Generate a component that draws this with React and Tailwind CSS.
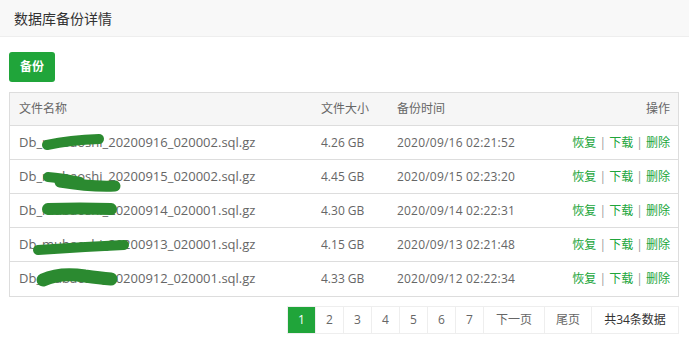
import React from 'react'

const rows = [
  { name: 'Db_mubaoshi_20200916_020002.sql.gz', size: '4.26 GB', time: '2020/09/16 02:21:52' },
  { name: 'Db_mubaoshi_20200915_020002.sql.gz', size: '4.45 GB', time: '2020/09/15 02:23:20' },
  { name: 'Db_mubaoshi_20200914_020001.sql.gz', size: '4.30 GB', time: '2020/09/14 02:22:31' },
  { name: 'Db_mubaoshi_20200913_020001.sql.gz', size: '4.15 GB', time: '2020/09/13 02:21:48' },
  { name: 'Db_mubaoshi_20200912_020001.sql.gz', size: '4.33 GB', time: '2020/09/12 02:22:34' },
]

const pages = ['1', '2', '3', '4', '5', '6', '7']

// green marker scribbles hiding part of the file names
function Scribbles() {
  return (
    <svg className="absolute left-0 top-0 pointer-events-none" width="689" height="345" viewBox="0 0 689 345">
      <g fill="none" stroke="#2b8a30" strokeLinecap="round">
        <path d="M47 145 Q70 140 99 139" strokeWidth="10" />
        <path d="M48 177 Q62 178 80 182" strokeWidth="10" />
        <path d="M60 182 Q90 187 115 186" strokeWidth="11" />
        <path d="M48 209 Q80 208 111 209" strokeWidth="12" />
        <path d="M38 250 Q80 247 124 245" strokeWidth="10" />
        <path d="M43 280 Q60 272 85 276 Q100 278 111 279" strokeWidth="13" />
      </g>
    </svg>
  )
}

export default function App() {
  return (
    <div className="relative w-[689px] h-[345px] bg-white text-[#666] font-['Open_Sans','Noto_Sans_CJK_SC',sans-serif] overflow-hidden">
      {/* title bar */}
      <div className="h-[37px] bg-[#f8f8f8] border-b border-[#eee] flex items-center px-[14px]">
        <span className="text-[14px] text-[#333]">数据库备份详情</span>
      </div>

      <div className="pl-[9px] pr-[10px] pt-[15px]">
        <button className="h-[30px] w-[46px] rounded-[3px] bg-[#20a53a] text-white text-[12px] font-bold">备份</button>

        {/* table */}
        <div className="mt-[10px] border border-[#ddd] text-[12px]">
          <div className="grid grid-cols-[302px_76px_1fr_auto] h-[33px] items-center bg-[#f6f6f6] border-b border-[#ddd] px-[9px] pr-[8px]">
            <span>文件名称</span>
            <span>文件大小</span>
            <span>备份时间</span>
            <span className="text-right">操作</span>
          </div>
          {rows.map((r, i) => (
            <div
              key={r.time}
              className={`grid grid-cols-[302px_76px_1fr_auto] h-[34px] items-center px-[9px] pr-[8px] ${i < rows.length - 1 ? 'border-b border-[#ddd]' : 'h-[33px]'}`}
            >
              <span className="text-[13px]">{r.name}</span>
              <span>{r.size}</span>
              <span className="tracking-[0.2px]">{r.time}</span>
              <span className="text-right">
                <a className="text-[#20a53a]">恢复</a>
                <span className="text-[#999]"> | </span>
                <a className="text-[#20a53a]">下载</a>
                <span className="text-[#999]"> | </span>
                <a className="text-[#20a53a]">删除</a>
              </span>
            </div>
          ))}
        </div>

        {/* pagination */}
        <div className="mt-[9px] flex justify-end text-[12px]">
          <div className="flex border-t border-b border-l border-[#eee] h-[28px]">
            {pages.map((p) => (
              <span
                key={p}
                className={`w-[28px] flex items-center justify-center border-r border-[#eee] ${p === '1' ? 'bg-[#20a53a] text-white' : ''}`}
              >
                {p}
              </span>
            ))}
            <span className="w-[61px] flex items-center justify-center border-r border-[#eee]">下一页</span>
            <span className="w-[47px] flex items-center justify-center border-r border-[#eee]">尾页</span>
            <span className="w-[87px] flex items-center justify-center border-r border-[#eee] text-[#333]">共34条数据</span>
          </div>
        </div>
      </div>

      <Scribbles />
    </div>
  )
}
